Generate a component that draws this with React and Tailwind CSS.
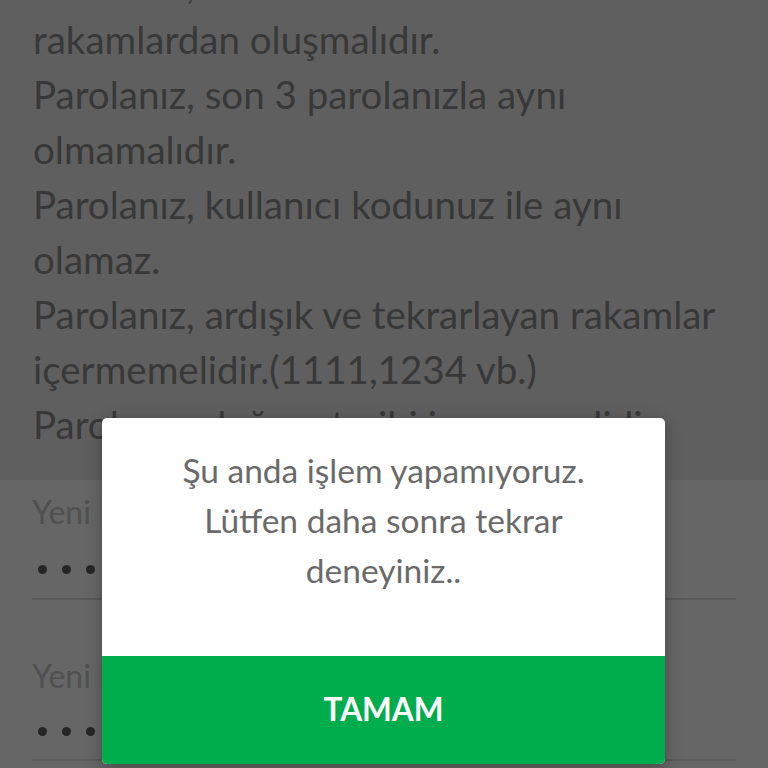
import React from "react";

const font = { fontFamily: "Lato, 'Open Sans', sans-serif" };

function Dots() {
  return (
    <div className="flex items-center gap-[15px] pl-[38px] h-[30px]">
      <span className="w-[9px] h-[9px] rounded-full bg-[#262626]" />
      <span className="w-[9px] h-[9px] rounded-full bg-[#262626]" />
      <span className="w-[9px] h-[9px] rounded-full bg-[#262626]" />
      <span className="w-[9px] h-[9px] rounded-full bg-[#262626]" />
      <span className="w-[9px] h-[9px] rounded-full bg-[#262626]" />
      <span className="w-[9px] h-[9px] rounded-full bg-[#262626]" />
    </div>
  );
}

export default function App() {
  const lines = [
    "Parolanız, 6 haneli ve sadece",
    "rakamlardan oluşmalıdır.",
    "Parolanız, son 3 parolanızla aynı",
    "olmamalıdır.",
    "Parolanız, kullanıcı kodunuz ile aynı",
    "olamaz.",
    "Parolanız, ardışık ve tekrarlayan rakamlar",
    "içermemelidir.(1111,1234 vb.)",
    "Parolanız, doğum tarihi içermemelidir.",
  ];
  return (
    <div className="relative w-[768px] h-[768px] overflow-hidden bg-[#5f5f5f]" style={font}>
      <div className="bg-[#5f5f5f] pl-[33px] mt-[-43px] h-[523px]">
        {lines.map((l, i) => (
          <div
            key={i}
            className="h-[55px] leading-[55px] text-[38.5px] text-[#383838] whitespace-nowrap"
          >
            {l}
          </div>
        ))}
      </div>
      <div className="bg-[#666666] h-[300px] px-[32px]">
        <div className="pt-[14px] text-[32px] leading-[36px] text-[#505050]">Yeni Parola</div>
        <div className="mt-[24px] ml-[-32px]"><Dots /></div>
        <div className="mt-[14px] h-[2px] bg-[#595959]" />
        <div className="pt-[58px] text-[32px] leading-[36px] text-[#505050]">Yeni Parola (Tekrar)</div>
        <div className="mt-[22px] ml-[-32px]"><Dots /></div>
        <div className="mt-[13px] h-[2px] bg-[#595959]" />
      </div>

      <div className="absolute left-[102px] top-[418px] w-[563px] h-[346px] rounded-[5px] overflow-hidden bg-white flex flex-col shadow-[0_4px_16px_rgba(0,0,0,0.3)]">
        <div className="flex-1 flex flex-col items-center pt-[27px] text-[33.5px] leading-[50px] text-[#6a6a6a]">
          <div>Şu anda işlem yapamıyoruz.</div>
          <div>Lütfen daha sonra tekrar</div>
          <div>deneyiniz..</div>
        </div>
        <div className="h-[108px] bg-[#00ad4d] flex items-center justify-center text-white font-bold text-[31.5px]">
          TAMAM
        </div>
      </div>
    </div>
  );
}
